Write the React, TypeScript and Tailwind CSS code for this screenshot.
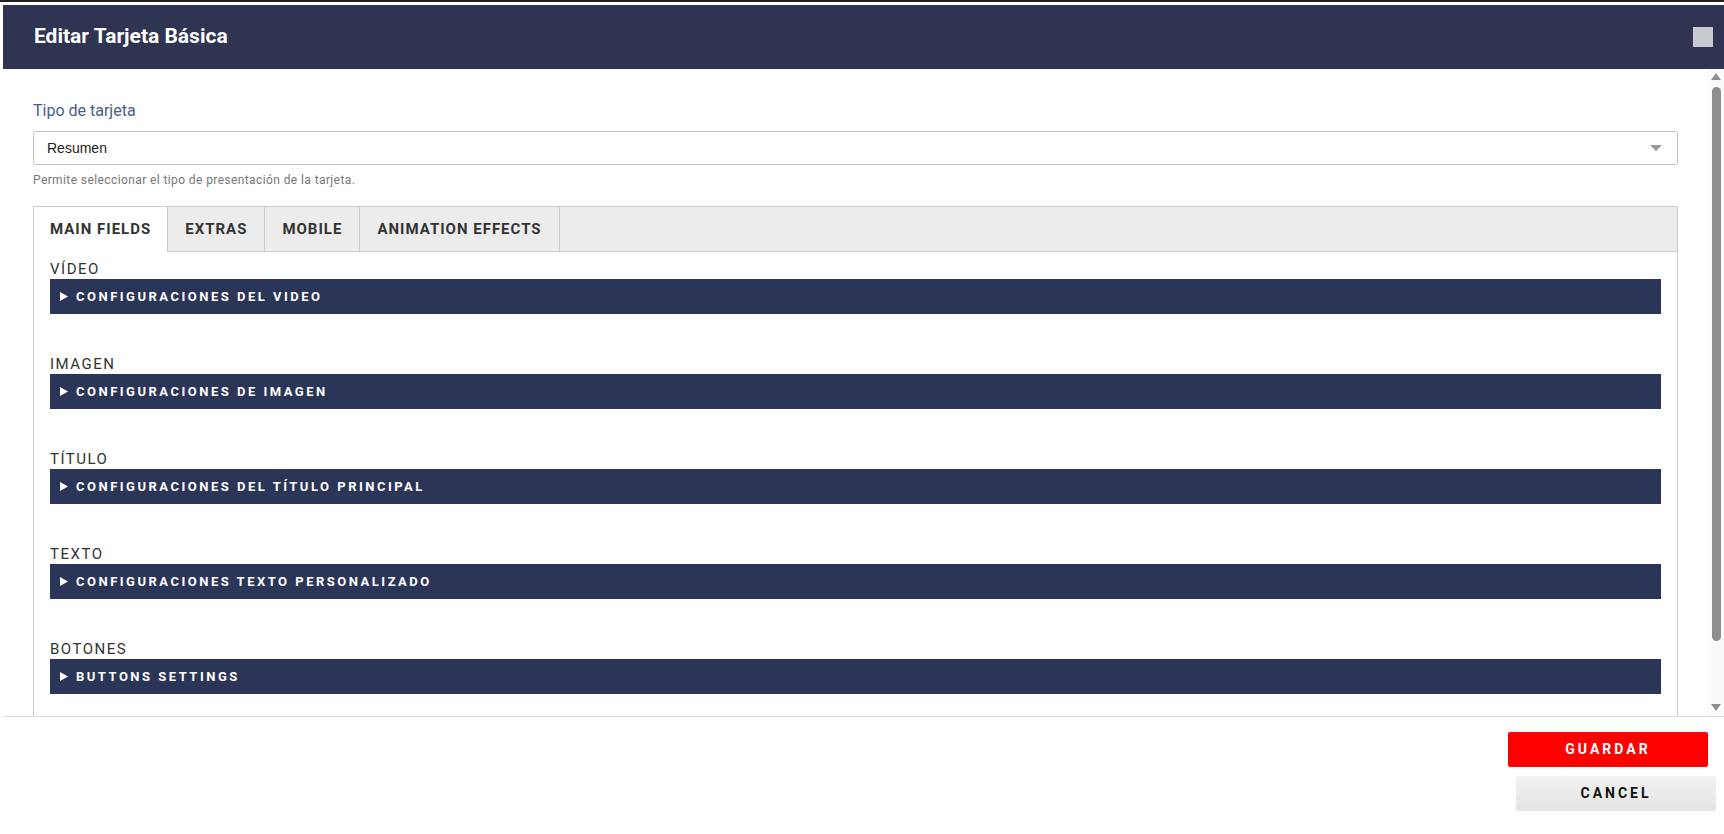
import React from 'react';

const sections = [
  { label: 'VÍDEO', bar: 'CONFIGURACIONES DEL VIDEO' },
  { label: 'IMAGEN', bar: 'CONFIGURACIONES DE IMAGEN' },
  { label: 'TÍTULO', bar: 'CONFIGURACIONES DEL TÍTULO PRINCIPAL' },
  { label: 'TEXTO', bar: 'CONFIGURACIONES TEXTO PERSONALIZADO' },
  { label: 'BOTONES', bar: 'BUTTONS SETTINGS' },
];

const tabs = ['MAIN FIELDS', 'EXTRAS', 'MOBILE', 'ANIMATION EFFECTS'];

function Caret() {
  return (
    <svg width="12" height="6" viewBox="0 0 12 6" className="shrink-0">
      <path d="M0 0h12L6 6z" fill="#999999" />
    </svg>
  );
}

function SectionBar(props: { label: string; bar: string }) {
  return (
    <div className="mb-[41px]">
      <div className="mb-px h-[18px] text-[15px] leading-[18px] tracking-[1.5px] text-[#333]">
        {props.label}
      </div>
      <div className="flex h-[35px] items-center gap-[8px] bg-[#2b3557] pl-[10px]">
        <svg width="8" height="9" viewBox="0 0 8 9" className="shrink-0">
          <path d="M0 0l8 4.5L0 9z" fill="#ffffff" />
        </svg>
        <span className="text-[13px] font-bold tracking-[2.5px] text-white">{props.bar}</span>
      </div>
    </div>
  );
}

function Scrollbar() {
  return (
    <div className="flex w-[16px] shrink-0 flex-col items-center bg-[#fafafa] pt-[4px] pb-[5px]">
      <svg width="10" height="7" viewBox="0 0 10 7">
        <path d="M0 7L5 0l5 7z" fill="#8e8e8e" />
      </svg>
      <div className="mt-[7px] h-[554px] w-[9px] rounded-full bg-[#8e8e8e]" />
      <div className="flex-1" />
      <svg width="10" height="7" viewBox="0 0 10 7">
        <path d="M0 0h10L5 7z" fill="#8e8e8e" />
      </svg>
    </div>
  );
}

export default function App() {
  return (
    <div className="h-[834px] w-[1724px] overflow-hidden border-t-2 border-[#222] bg-white pt-[3px] font-['Roboto',sans-serif]">
      <div className="ml-[3px] flex h-full flex-col">
        {/* header */}
        <div className="flex h-[64px] shrink-0 items-center justify-between bg-[#2e3451] pl-[31px] pr-[11px]">
          <h1 className="text-[21px] font-bold text-white">Editar Tarjeta Básica</h1>
          <div className="h-[20px] w-[20px] bg-[#c9c9d0]" />
        </div>

        {/* body */}
        <div className="flex h-[647px] shrink-0">
          <div className="flex-1 overflow-hidden px-[30px] pt-[32px]">
            <div className="mb-[10px] h-[20px] text-[16px] leading-[20px] text-[#4a5c8a]">Tipo de tarjeta</div>
            <div className="flex h-[34px] items-center justify-between rounded-[3px] border border-[#c4c4c4] pl-[13px] pr-[15px]">
              <span className="font-['Liberation_Sans',Arial,sans-serif] text-[14px] text-[#222]">Resumen</span>
              <Caret />
            </div>
            <div className="mt-[7px] h-[16px] text-[12px] leading-[16px] tracking-[0.4px] text-[#777]">
              Permite seleccionar el tipo de presentación de la tarjeta.
            </div>

            <div className="mt-[18px] border border-[#ccc]">
              <div className="flex h-[45px] border-b border-[#ccc] bg-[#ececec]">
                {tabs.map((t, i) => (
                  <div
                    key={t}
                    className={
                      i === 0
                        ? 'flex h-[45px] items-center self-start border-r border-[#ccc] bg-white px-[16px] text-[15px] font-bold tracking-[1px] text-[#333]'
                        : 'flex items-center border-r border-[#ccc] px-[17px] text-[15px] font-bold tracking-[1px] text-[#333]'
                    }
                  >
                    {t}
                  </div>
                ))}
              </div>
              <div className="px-[16px] pt-[8px]">
                {sections.map((s) => (
                  <SectionBar key={s.label} label={s.label} bar={s.bar} />
                ))}
              </div>
            </div>
          </div>
          <Scrollbar />
        </div>

        {/* footer */}
        <div className="flex flex-1 flex-col items-end border-t border-[#ddd] pt-[15px]">
          <button className="mr-[16px] h-[35px] w-[200px] rounded-[2px] bg-[#ff0000] text-[14px] font-bold tracking-[3px] text-white">
            GUARDAR
          </button>
          <button className="mr-[8px] mt-[9px] h-[35px] w-[200px] rounded-[2px] bg-gradient-to-b from-[#f2f2f2] to-[#e4e4e4] text-[14px] font-bold tracking-[3px] text-[#111]">
            CANCEL
          </button>
        </div>
      </div>
    </div>
  );
}
